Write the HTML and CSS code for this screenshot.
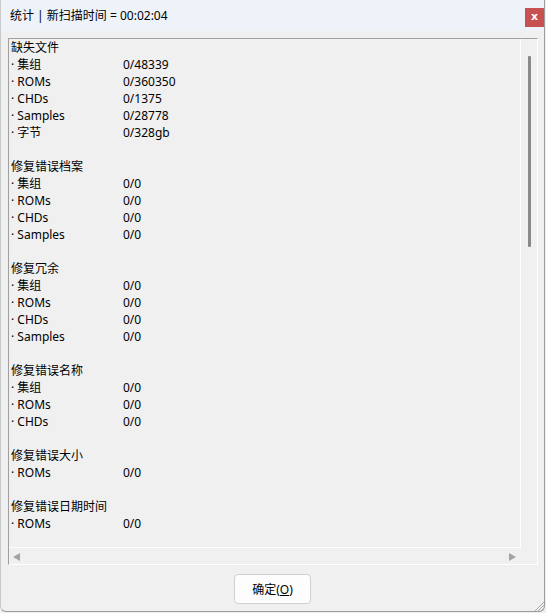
FILE: index.html
```html
<!DOCTYPE html>
<html lang="zh-CN">
<head>
<meta charset="utf-8">
<title>统计</title>
<link rel="stylesheet" href="styles.css">
</head>
<body>
<div class="window">
  <div class="titlebar">
    <span class="title">统计 | 新扫描时间 = 00:02:04</span>
    <span class="close">x</span>
  </div>
  <div class="client">
    <div class="panel">
      <div class="content">
        <div class="line head">缺失文件</div>
        <div class="line"><span class="lbl">· 集组</span><span>0/48339</span></div>
        <div class="line"><span class="lbl">· ROMs</span><span>0/360350</span></div>
        <div class="line"><span class="lbl">· CHDs</span><span>0/1375</span></div>
        <div class="line"><span class="lbl">· Samples</span><span>0/28778</span></div>
        <div class="line"><span class="lbl">· 字节</span><span>0/328gb</span></div>
        <div class="line"></div>
        <div class="line head">修复错误档案</div>
        <div class="line"><span class="lbl">· 集组</span><span>0/0</span></div>
        <div class="line"><span class="lbl">· ROMs</span><span>0/0</span></div>
        <div class="line"><span class="lbl">· CHDs</span><span>0/0</span></div>
        <div class="line"><span class="lbl">· Samples</span><span>0/0</span></div>
        <div class="line"></div>
        <div class="line head">修复冗余</div>
        <div class="line"><span class="lbl">· 集组</span><span>0/0</span></div>
        <div class="line"><span class="lbl">· ROMs</span><span>0/0</span></div>
        <div class="line"><span class="lbl">· CHDs</span><span>0/0</span></div>
        <div class="line"><span class="lbl">· Samples</span><span>0/0</span></div>
        <div class="line"></div>
        <div class="line head">修复错误名称</div>
        <div class="line"><span class="lbl">· 集组</span><span>0/0</span></div>
        <div class="line"><span class="lbl">· ROMs</span><span>0/0</span></div>
        <div class="line"><span class="lbl">· CHDs</span><span>0/0</span></div>
        <div class="line"></div>
        <div class="line head">修复错误大小</div>
        <div class="line"><span class="lbl">· ROMs</span><span>0/0</span></div>
        <div class="line"></div>
        <div class="line head">修复错误日期时间</div>
        <div class="line"><span class="lbl">· ROMs</span><span>0/0</span></div>
        <div class="line"></div>
      </div>
      <div class="vscroll"><div class="thumb"></div></div>
      <div class="hscroll">
        <svg class="arrow" width="7" height="8" viewBox="0 0 7 8"><path d="M0 4 L7 0 L7 8 Z" fill="#a3a3a3"/></svg>
        <svg class="arrow" width="7" height="8" viewBox="0 0 7 8"><path d="M7 4 L0 0 L0 8 Z" fill="#a3a3a3"/></svg>
      </div>
      <div class="corner"></div>
    </div>
    <div class="buttons">
      <button class="ok">确定(<u>O</u>)</button>
    </div>
  </div>
  <svg class="grip" width="10" height="10" viewBox="0 0 10 10">
    <path d="M10 1 L1 10 M10 4 L4 10 M10 7 L7 10" stroke="#a8a8a8" stroke-width="1"/>
  </svg>
</div>
</body>
</html>
```

FILE: styles.css
```css
html, body {
  margin: 0;
  padding: 0;
  background: #f0f0f0;
}

body {
  width: 546px;
  height: 613px;
  overflow: hidden;
  font-family: "Noto Sans", "Noto Sans CJK SC", sans-serif;
  font-size: 12px;
  color: #000;
}

.window {
  position: relative;
  width: 545px;
  height: 612px;
  box-sizing: border-box;
  border-left: 1px solid #c9c9c9;
  border-right: 1px solid #9c9c9c;
  border-bottom: 1px solid #9c9c9c;
  border-radius: 0 0 6px 6px;
  background: #f0f0f0;
  display: flex;
  flex-direction: column;
}

.titlebar {
  height: 31px;
  flex: none;
  background: #eef2f9;
  display: flex;
  align-items: center;
  padding-left: 9px;
}

.title {
  line-height: 31px;
  white-space: nowrap;
}

.close {
  margin-left: auto;
  align-self: flex-start;
  margin-top: 8px;
  margin-right: 0;
  width: 19px;
  height: 19px;
  background: #c75050;
  color: #fff;
  font-family: "DejaVu Sans", sans-serif;
  font-weight: bold;
  font-size: 11px;
  line-height: 18px;
  text-align: center;
}

.client {
  flex: 1;
  padding: 7px 0 0 7px;
  display: flex;
  flex-direction: column;
}

.panel {
  width: 530px;
  height: 527px;
  box-sizing: border-box;
  border-top: 1px solid #a0a0a0;
  border-left: 1px solid #a0a0a0;
  border-right: 1px solid #ffffff;
  border-bottom: 1px solid #ffffff;
  display: grid;
  grid-template-columns: 512px 16px;
  grid-template-rows: 509px 16px;
}

.content {
  box-sizing: border-box;
  border-right: 1px solid #ffffff;
  border-bottom: 1px solid #ffffff;
  padding-left: 2px;
  overflow: hidden;
}

.line {
  height: 17px;
  line-height: 17px;
  display: flex;
  white-space: nowrap;
}

.lbl {
  width: 112px;
  flex: none;
}

.vscroll {
  position: relative;
}

.thumb {
  margin: 17px 0 0 7px;
  width: 3px;
  height: 191px;
  background: #8a8a8a;
  border-radius: 1px;
}

.hscroll {
  display: flex;
  justify-content: space-between;
  align-items: flex-start;
  padding: 5px 5px 0 4px;
}

.arrow {
  display: block;
}

.buttons {
  display: flex;
  justify-content: center;
  padding-top: 9px;
  padding-right: 7px;
}

.ok {
  width: 77px;
  height: 30px;
  box-sizing: border-box;
  background: #fdfdfd;
  border: 1px solid #d0d0d0;
  border-radius: 4px;
  font-family: "Noto Sans", "Noto Sans CJK SC", sans-serif;
  font-size: 12px;
  color: #000;
  padding: 0;
}

.grip {
  position: absolute;
  right: 0;
  bottom: 0;
}
```
